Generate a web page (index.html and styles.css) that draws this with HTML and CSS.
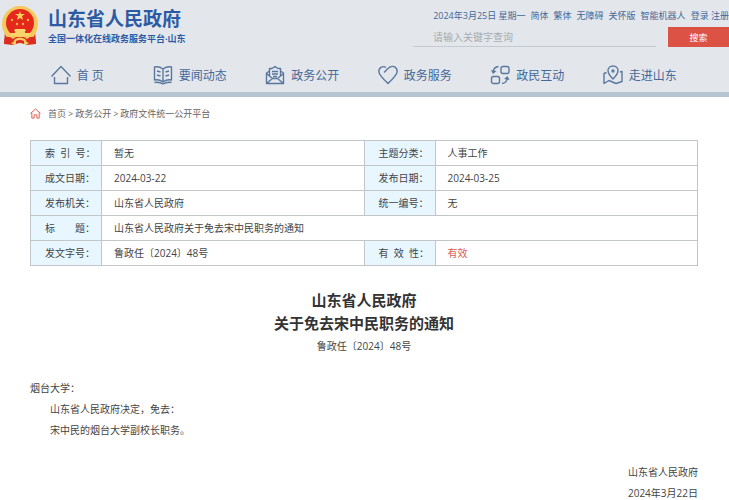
FILE: index.html
```
<!DOCTYPE html>
<html lang="zh-CN">
<head>
  <meta charset="UTF-8">
  <meta name="viewport" content="width=device-width, initial-scale=1.0">
  <title>山东省人民政府关于免去宋中民职务的通知</title>
  <link rel="stylesheet" href="styles.css">
</head>
<body>
  <header class="header">
    <div class="top">
      <a class="logo" href="#">
        <svg class="emblem" viewBox="0 0 38 40" aria-hidden="true">
          <path d="M4 25 L3 38 L12 39 L19 36 L26 39 L35 38 L34 25 Z" fill="#dc2c20"/>
          <circle cx="19" cy="18" r="18" fill="#f6c95c"/>
          <circle cx="19" cy="17" r="14" fill="#e5281c"/>
          <path d="M19 5l1 3h4l-3 2 1 4-3-2-3 2 1-4-3-2h4z" fill="#f8cf5c"/>
          <g fill="#f3b04a">
            <circle cx="11" cy="14" r="1.200"/><circle cx="27" cy="14" r="1.200"/>
            <circle cx="16" cy="18" r="1.200"/><circle cx="22" cy="18" r="1.200"/>
          </g>
          <path d="M14 23h10l1 2h-1v2h5v3H9v-3h5v-2h-1z" fill="#f9d468"/>
          <path d="M3 25q5 6 11 5h10q6 1 11-5l-3 8q-6 1-8-1l-3 2h-4l-3-2q-2 2-8 1z" fill="#f6c95c"/>
          <path d="M4 31q5-1 8 2l3-2h8l3 2q3-3 8-2l1 6q-5 1-9-2l-3 1h-8l-3-1q-4 3-9 2z" fill="#dc2c20"/>
          <path d="M10 37q3-1 4-4 5-3 10 0 1 3 4 4l-3 2q-6-4-12 0z" fill="#f6c95c"/>
          <path d="M15 35q4-2 8 0v3q-4-2-8 0z" fill="#dc2c20"/>
        </svg>
        <span class="logo-text">
          <strong>山东省人民政府</strong>
          <small>全国一体化在线政务服务平台·山东</small>
        </span>
      </a>
      <div class="tools">
        <div class="top-links">
          <span>2024年3月25日 星期一</span>
          <a href="#">简体</a>
          <a href="#">繁体</a>
          <a href="#">无障碍</a>
          <a href="#">关怀版</a>
          <a href="#">智能机器人</a>
          <span><a href="#">登录</a> <a href="#">注册</a></span>
        </div>
        <form class="search">
          <input type="text" placeholder="请输入关键字查询" aria-label="请输入关键字查询">
          <button type="button">搜索</button>
        </form>
      </div>
    </div>
    <nav class="nav">
      <a href="#">
        <svg viewBox="0 0 20 20"><path d="M.500 11.500 10 1.500 19.500 11.500M3.500 12V18.500H16.500V12"/></svg>
        首 页
      </a>
      <a href="#">
        <svg viewBox="0 0 20 20"><path d="M10 4Q6 1 1.500 2V15Q6 14 10 17Q14 14 18.500 15V2Q14 1 10 4V17M4 6l3.500 1M4 10l3.500 1M16 6l-3.500 1M16 10l-3.500 1M1.500 17.500Q6 16.500 10 19Q14 16.500 18.500 17.500"/></svg>
        要闻动态
      </a>
      <a href="#">
        <svg viewBox="0 0 20 20"><path d="M4.500 11V3.500H7L10 1.500L13 3.500H15.500V11M4.500 6L1.500 8V18.500H18.500V8L15.500 6M1.500 8.500L7.500 13.500H12.500L18.500 8.500M1.500 18.500L7.500 13.500M18.500 18.500L12.500 13.500M7 6.500H13M7 9H13M8 11.500H12"/></svg>
        政务公开
      </a>
      <a href="#">
        <svg viewBox="0 0 20 20"><path d="M6 7.500L10 3.500C14 -.500 19 1.500 19.200 6.500Q19 10 10 18.500Q1 10 .800 6.500C1 2 5 .500 8 2.500"/></svg>
        政务服务
      </a>
      <a href="#">
        <svg viewBox="0 0 20 20"><rect x="11" y="1.500" width="8" height="7" rx="2"/><rect x="1.500" y="11.500" width="8" height="7" rx="2"/><path d="M8.500 1.500Q4 2 3.500 6M12 18.500Q16.500 18 17 14"/><path class="solid" d="M1 5L3 9L6.500 6ZM14 14L17.500 11L19.500 15Z"/></svg>
        政民互动
      </a>
      <a href="#">
        <svg viewBox="0 0 20 20"><path d="M10 14Q5 9 5 5.500A5 4.500 0 0 1 15 5.500Q15 9 10 14ZM3.500 7.500L1 8.500V18.500L6 15.500L13 18.500L19 16.500V6.500L17 7"/><circle cx="10" cy="6" r="1"/></svg>
        走进山东
      </a>
    </nav>
  </header>

  <main class="content">
    <div class="crumbs">
      <svg viewBox="0 0 12 12"><path d="M.500 6 6 1 11.500 6M2 5V11H4.500V7.500H7.500V11H10V5"/></svg>
      <a href="#">首页</a> &gt; <a href="#">政务公开</a> &gt; <a href="#">政府文件统一公开平台</a>
    </div>

    <table class="info">
      <tr>
        <th scope="row">索&nbsp;&nbsp;引&nbsp;&nbsp;号：</th><td>暂无</td>
        <th scope="row">主题分类：</th><td>人事工作</td>
      </tr>
      <tr>
        <th scope="row">成文日期：</th><td>2024-03-22</td>
        <th scope="row">发布日期：</th><td>2024-03-25</td>
      </tr>
      <tr>
        <th scope="row">发布机关：</th><td>山东省人民政府</td>
        <th scope="row">统一编号：</th><td>无</td>
      </tr>
      <tr>
        <th scope="row">标　　题：</th><td colspan="3">山东省人民政府关于免去宋中民职务的通知</td>
      </tr>
      <tr>
        <th scope="row">发文字号：</th><td>鲁政任〔2024〕48号</td>
        <th scope="row">有&nbsp;&nbsp;效&nbsp;&nbsp;性：</th><td class="valid">有效</td>
      </tr>
    </table>

    <article class="article">
      <h1>山东省人民政府<br>关于免去宋中民职务的通知</h1>
      <p class="number">鲁政任〔2024〕48号</p>
      <p>烟台大学：</p>
      <p class="indent">山东省人民政府决定，免去：</p>
      <p class="indent">宋中民的烟台大学副校长职务。</p>
      <div class="sign">
        <p>山东省人民政府</p>
        <p>2024年3月22日</p>
      </div>
    </article>
  </main>
</body>
</html>
```
FILE: styles.css
```
* {
  box-sizing: border-box;
}
body {
  margin: 0;
  background: #fff;
  color: #444;
  font-family: "Open Sans", "Noto Sans CJK SC", sans-serif;
  font-size: 10px;
}
a {
  color: inherit;
  text-decoration: none;
}
p {
  margin: 0;
}

/* header */
.header {
  background: #e3e7ec;
  border-bottom: 5px solid #b5c4d3;
  color: #456898;
}
.top {
  display: flex;
  justify-content: space-between;
  height: 58px;
}
.logo {
  display: flex;
  gap: 9px;
  padding: 6px 0 0 1px;
  color: #2d5ba3;
}
.emblem {
  width: 38px;
  height: 40px;
}
.logo-text strong,
.logo-text small {
  display: block;
  font-weight: bold;
  white-space: nowrap;
}
.logo-text strong {
  font-size: 19px;
  line-height: 26px;
}
.logo-text small {
  font-size: 9px;
  line-height: 14px;
}
.tools {
  width: 316px;
  padding-top: 8px;
}
.top-links {
  display: flex;
  justify-content: flex-end;
  gap: 5px;
  font-size: 9px;
  line-height: 15px;
  white-space: nowrap;
}
.search {
  display: flex;
  gap: 12px;
  margin-top: 4px;
}
.search input {
  flex: 1;
  min-width: 0;
  height: 20px;
  padding: 0 0 0 20px;
  border: 0;
  border-bottom: 1px solid #c6c9d0;
  background: none;
  font: inherit;
}
.search input::placeholder {
  color: #aaa;
}
.search button {
  width: 61px;
  height: 20px;
  padding: 0;
  border: 0;
  background: #dc5244;
  color: #fff;
  font: inherit;
  font-size: 9px;
}
.nav {
  display: grid;
  grid-template-columns: repeat(6, 1fr);
  height: 34px;
  padding: 0 33px 0 21px;
  font-size: 12px;
}
.nav a {
  display: flex;
  align-items: center;
  justify-content: center;
  gap: 6px;
  white-space: nowrap;
}
.nav svg {
  width: 20px;
  height: 20px;
  fill: none;
  stroke: #5a789f;
  stroke-width: 1.4;
  stroke-linejoin: round;
}
.nav .solid {
  fill: #5a789f;
  stroke: none;
}

/* content */
.content {
  padding: 0 31px 0 30px;
}
.crumbs {
  display: flex;
  align-items: center;
  gap: 2px;
  height: 32px;
  font-size: 9px;
  color: #666;
}
.crumbs svg {
  width: 11px;
  height: 11px;
  margin-right: 5px;
  fill: none;
  stroke: #d9584c;
}
.info {
  width: 100%;
  margin-top: 11px;
  border-collapse: collapse;
  table-layout: fixed;
}
.info th,
.info td {
  height: 25px;
  padding: 0 12px;
  border: 1px solid #c3c6c8;
  line-height: 16px;
  text-align: left;
}
.info th {
  width: 71px;
  padding: 0 0 0 14px;
  background: #e8f6ff;
  font-weight: normal;
  white-space: nowrap;
}
.info .valid {
  color: #dc5a4e;
}
.article {
  padding-top: 23px;
  line-height: 21px;
}
.article h1 {
  margin: 0 0 1px;
  color: #333;
  font-size: 15px;
  line-height: 23px;
  text-align: center;
}
.number {
  margin-bottom: 21px;
  text-align: center;
}
.indent {
  padding-left: 20px;
}
.sign {
  margin-top: 21px;
  text-align: right;
}
```
